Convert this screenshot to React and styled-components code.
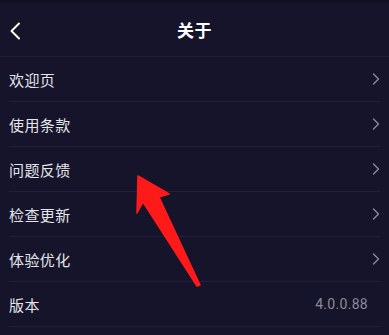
import React from 'react';
import styled, { createGlobalStyle } from 'styled-components';

const GlobalStyle = createGlobalStyle`
  html, body {
    margin: 0;
    padding: 0;
    background: #15142b;
  }
  body {
    font-family: "Noto Sans CJK SC", "Noto Sans", sans-serif;
  }
`;

const Page = styled.div`
  position: relative;
  width: 389px;
  height: 335px;
  overflow: hidden;
  background: #15142b;
`;

const Header = styled.div`
  display: flex;
  align-items: center;
  justify-content: center;
  position: relative;
  height: 56px;
  border-bottom: 1px solid #1f1e36;
  box-shadow: inset 0 3px 0 #110f24;
`;

const BackButton = styled.div`
  position: absolute;
  left: 9px;
  top: 22px;
  width: 12px;
  height: 18px;
  display: flex;
`;

const Title = styled.h1`
  margin: 0;
  margin-top: 3px;
  font-size: 17px;
  font-weight: 700;
  color: #ffffff;
  letter-spacing: 0.5px;
`;

const List = styled.div`
  display: flex;
  flex-direction: column;
`;

const Row = styled.div`
  display: flex;
  align-items: center;
  justify-content: space-between;
  height: 44px;
  margin: 0 9px;
  border-bottom: 1px solid #22213a;
`;

const Label = styled.span`
  font-size: 15px;
  color: #e4e4ea;
  letter-spacing: 0.4px;
`;

const Value = styled.span`
  font-family: "Roboto", "Liberation Sans", sans-serif;
  font-size: 14px;
  color: #8b8a98;
  margin-right: 12px;
  letter-spacing: 0.3px;
`;

const Chevron = styled.svg`
  width: 8px;
  height: 12px;
`;

const Pointer = styled.svg`
  position: absolute;
  left: 0;
  top: 0;
  pointer-events: none;
`;

const items = ['欢迎页', '使用条款', '问题反馈', '检查更新', '体验优化'];

const ChevronRight = () => (
  <Chevron viewBox="0 0 8 12">
    <path d="M1.5 1 L6.5 6 L1.5 11" fill="none" stroke="#8d8c9c" strokeWidth="1.3" strokeLinecap="round" strokeLinejoin="round" />
  </Chevron>
);

const App = () => (
  <Page>
    <GlobalStyle />
    <Header>
      <BackButton>
        <svg width="12" height="18" viewBox="0 0 12 18">
          <path d="M10 1.5 L2.5 9 L10 16.5" fill="none" stroke="#ffffff" strokeWidth="1.9" strokeLinecap="round" strokeLinejoin="round" />
        </svg>
      </BackButton>
      <Title>关于</Title>
    </Header>
    <List>
      {items.map((item) => (
        <Row key={item}>
          <Label>{item}</Label>
          <ChevronRight />
        </Row>
      ))}
      <Row>
        <Label>版本</Label>
        <Value>4.0.0.88</Value>
      </Row>
    </List>
    <Pointer width="389" height="335" viewBox="0 0 389 335">
      <path
        d="M138 176 L169 194 L159 197 L200 285 L197 286 L143 202 L137 213 Z"
        fill="#ff1a1a"
        stroke="#ff1a1a"
        strokeWidth="1.5"
        strokeLinejoin="round"
      />
    </Pointer>
  </Page>
);

export default App;
